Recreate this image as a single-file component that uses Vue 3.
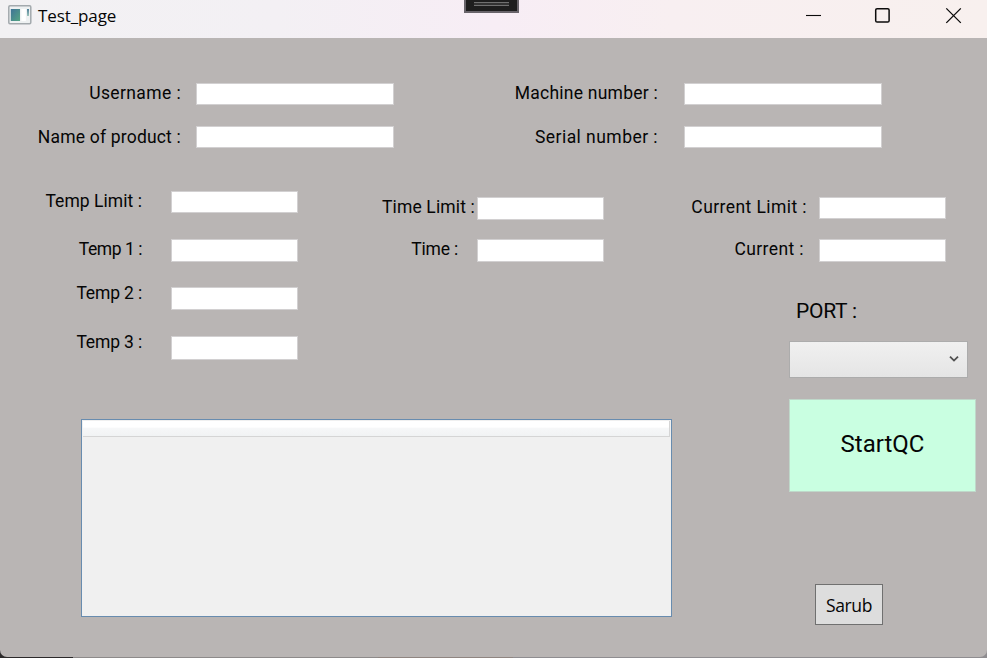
<script setup>
const identity = [
  {
    name: 'operator',
    labels: [
      { text: 'Username :', tracking: 0.38 },
      { text: 'Name of product :', tracking: 0.19 },
    ],
  },
  {
    name: 'machine',
    labels: [
      { text: 'Machine number :', tracking: 0.24 },
      { text: 'Serial number :', tracking: 0.45 },
    ],
  },
]
const measures = [
  {
    name: 'temp',
    labels: [
      { text: 'Temp Limit :', tracking: 0.05 },
      { text: 'Temp 1 :', tracking: -0.45 },
      { text: 'Temp 2 :', tracking: -0.15 },
      { text: 'Temp 3 :', tracking: -0.15 },
    ],
  },
  {
    name: 'time',
    labels: [
      { text: 'Time Limit :', tracking: 0.15 },
      { text: 'Time :', tracking: -0.2 },
    ],
  },
]
const current = [
  { text: 'Current Limit :', tracking: 0.42 },
  { text: 'Current :', tracking: 0.4 },
]
</script>

<template>
  <div class="desktop">
    <div class="window">
      <header class="titlebar">
        <svg class="app-icon" width="24" height="20" viewBox="0 0 24 20">
          <defs>
            <linearGradient id="pane" x1="0" y1="0" x2="1" y2="1">
              <stop offset="0" stop-color="#3f7397" />
              <stop offset="1" stop-color="#55a583" />
            </linearGradient>
            <linearGradient id="bar" x1="0" y1="0" x2="0" y2="1">
              <stop offset="0" stop-color="#4f7f99" />
              <stop offset="1" stop-color="#9cc4bb" />
            </linearGradient>
          </defs>
          <rect x="0.8" y="0.8" width="22" height="18" rx="1.2" fill="#eef1f2" stroke="#a3a9ad" stroke-width="1.5" />
          <rect x="2.8" y="4" width="9.2" height="12" fill="url(#pane)" />
          <rect x="13.4" y="4" width="4.4" height="12" fill="#fff" />
          <rect x="19" y="4" width="2" height="7" fill="url(#bar)" />
        </svg>
        <span class="title">Test_page</span>
        <div class="debug-handle"><i></i></div>
        <div class="controls">
          <svg width="187" height="38" viewBox="0 0 187 38" fill="none" stroke="#0c0b0b" stroke-width="1.3">
            <path d="M6 15.5H21" stroke-width="1.1" />
            <rect x="75.7" y="8.7" width="13.4" height="13.4" rx="1.4" stroke-width="1.5" />
            <path d="M146.3 8.4L160.8 22.9M160.8 8.4L146.3 22.9" />
          </svg>
        </div>
      </header>

      <main class="content">
        <section class="identity">
          <div v-for="g in identity" :key="g.name" class="group" :class="g.name">
            <div class="labels">
              <label v-for="l in g.labels" :key="l.text"><span :style="{ letterSpacing: l.tracking + 'px' }">{{ l.text }}</span></label>
            </div>
            <div class="boxes">
              <input v-for="l in g.labels" :key="l.text" type="text" />
            </div>
          </div>
        </section>

        <div class="body">
          <div class="left">
            <section class="measures">
              <div v-for="g in measures" :key="g.name" class="group" :class="g.name">
                <div class="labels">
                  <label v-for="l in g.labels" :key="l.text"><span :style="{ letterSpacing: l.tracking + 'px' }">{{ l.text }}</span></label>
                </div>
                <div class="boxes">
                  <input v-for="l in g.labels" :key="l.text" type="text" />
                </div>
              </div>
            </section>
            <div class="list"><div class="list-head"></div></div>
          </div>

          <aside class="right">
            <div class="group current">
              <div class="labels">
                <label v-for="l in current" :key="l.text"><span :style="{ letterSpacing: l.tracking + 'px' }">{{ l.text }}</span></label>
              </div>
              <div class="boxes">
                <input v-for="l in current" :key="l.text" type="text" />
              </div>
            </div>
            <div class="port"><span>PORT :</span></div>
            <div class="combo">
              <svg width="10" height="8" viewBox="0 0 10 8" fill="none" stroke="#505050" stroke-width="1.8">
                <path d="M1 1.6L5 5.6L9 1.6" />
              </svg>
            </div>
            <button class="start"><span>StartQC</span></button>
            <button class="sarub"><span>Sarub</span></button>
          </aside>
        </div>
      </main>
    </div>
  </div>
</template>

<style>
body {
  margin: 0;
  overflow: hidden;
}
</style>

<style scoped>
* {
  box-sizing: border-box;
}
.desktop {
  width: 987px;
  height: 658px;
  background: linear-gradient(90deg, #2c2a2b 0 73px, #8d8a8a 73px 378px, #8f8581 378px 513px, #8f8d90 513px);
}
.window {
  width: 987px;
  height: 657px;
  display: flex;
  flex-direction: column;
  background: #b9b5b4;
  border-radius: 0 0 7px 7px;
  overflow: hidden;
  font-family: Roboto, 'Liberation Sans', sans-serif;
  color: #050505;
}
.titlebar {
  position: relative;
  display: flex;
  flex: none;
  height: 38px;
  background: linear-gradient(90deg, #f2f1f3 0, #f3f0f4 28%, #f7edf5 50%, #f8eff1 68%, #f8f0ee 100%);
}
.app-icon {
  margin: 5px 0 0 8px;
}
.title {
  margin-left: 6px;
  font: 17px/32px 'Open Sans', 'Noto Sans', sans-serif;
  letter-spacing: -0.1px;
}
.debug-handle {
  position: absolute;
  left: 464px;
  top: 0;
  width: 55px;
  height: 13px;
  padding: 2px 8px 0;
  background: #1e1e1e;
  border: solid #68646a;
  border-width: 0 2px 2px;
}
.debug-handle i {
  display: block;
  height: 4px;
  border: solid #707070;
  border-width: 1px 0;
  background: #333;
}
.controls {
  margin-left: auto;
  height: 38px;
}
.content {
  flex: 1;
  padding-top: 45px;
}
.identity {
  display: flex;
  height: 108px;
}
.group {
  display: flex;
}
.labels,
.boxes {
  display: flex;
  flex-direction: column;
}
.labels {
  align-items: flex-end;
}
label {
  font-size: 17.5px;
  line-height: 20px;
  height: 20px;
  white-space: nowrap;
}
input {
  display: block;
  padding: 0;
  margin: 0;
  height: 22px;
  background: #fff;
  border: 1px solid #d2d0d1;
  border-radius: 0;
}
.operator .labels {
  width: 181px;
  gap: 24px;
}
.operator .boxes {
  margin-left: 15px;
}
.machine .labels {
  width: 264px;
  gap: 24px;
}
.machine .boxes {
  margin-left: 26px;
}
.identity .boxes {
  gap: 21px;
}
.identity input {
  width: 198px;
}
.body {
  display: flex;
}
.left {
  width: 672px;
}
.measures {
  display: flex;
  height: 228px;
}
.measures input,
.current input {
  width: 127px;
}
.temp .labels {
  width: 142px;
}
.temp label:nth-child(2) {
  margin-top: 28px;
}
.temp label:nth-child(3) {
  margin-top: 24px;
}
.temp label:nth-child(4) {
  margin-top: 29px;
}
.temp .boxes {
  margin-left: 29px;
  gap: 25px;
}
.temp input:nth-child(1) {
  margin-bottom: 1px;
}
.temp input:nth-child(n + 2) {
  height: 23px;
}
.temp input:nth-child(4) {
  height: 24px;
  margin-top: 1px;
}
.time {
  padding-top: 6px;
}
.time .labels {
  width: 177px;
  gap: 22px;
}
.time label:nth-child(2) {
  padding-right: 17px;
}
.time .boxes {
  margin-left: 2px;
  gap: 19px;
}
.time input {
  height: 23px;
}
.list {
  width: 591px;
  height: 198px;
  margin-left: 81px;
  padding: 1px;
  background: #f0f0f0;
  border: 1px solid #688caf;
}
.list-head {
  height: 16px;
  background: linear-gradient(#fff 0 40%, #f6f7f8 50%, #f1f3f4);
  border: solid #d5d5d5;
  border-width: 0 1px 1px 0;
}
.right {
  width: 315px;
}
.current {
  padding-top: 6px;
}
.current .labels {
  width: 135px;
  gap: 22px;
}
.current label:nth-child(2) {
  padding-right: 3px;
}
.current .boxes {
  margin-left: 12px;
  gap: 20px;
}
.current input:nth-child(2) {
  height: 23px;
}
.port {
  margin: 37px 0 0 124px;
  font-size: 21px;
  line-height: 24px;
  letter-spacing: -0.25px;
}
.combo {
  display: flex;
  justify-content: flex-end;
  width: 179px;
  height: 37px;
  margin: 18px 0 0 117px;
  padding: 13px 8px 0 0;
  background: linear-gradient(#f0f0f0, #e5e5e5);
  border: 1px solid #acacac;
}
button {
  display: block;
  padding: 0;
  color: #050505;
  text-align: center;
}
.start {
  width: 187px;
  height: 93px;
  margin: 21px 0 0 117px;
  padding-bottom: 4px;
  background: #c9ffe1;
  border: 1px solid #bfd8ca;
  font: 24px Roboto, 'Liberation Sans', sans-serif;
}
.sarub {
  width: 68px;
  height: 41px;
  margin: 92px 0 0 143px;
  padding-top: 1px;
  background: #ddd;
  border: 1px solid #707070;
  font: 17.5px 'Open Sans', 'Noto Sans', sans-serif;
  letter-spacing: -0.4px;
}
</style>
